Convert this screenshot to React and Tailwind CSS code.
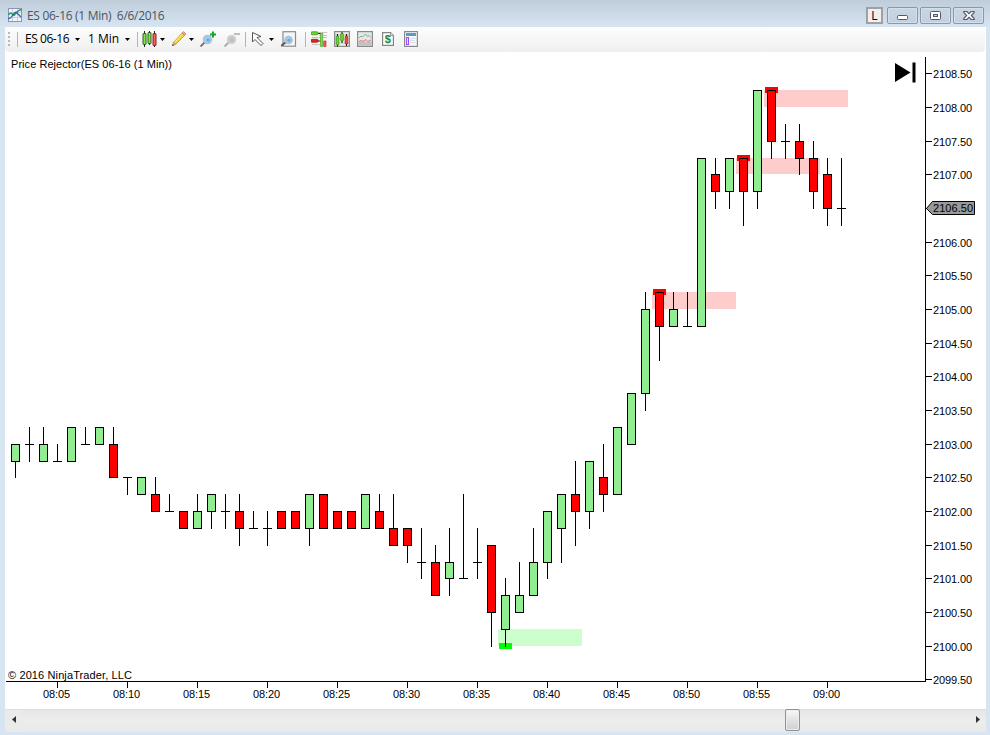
import React from 'react'

// levels are quarter point steps below 2108.50: [type, high, bodyTop, bodyBottom, low]
const candles = [
  ['up', 22, 22, 23, 24], ['flat', 21, 22, 22, 23], ['up', 21, 22, 23, 23], ['flat', 22, 23, 23, 23],
  ['up', 21, 21, 23, 23], ['flat', 21, 22, 22, 22], ['up', 21, 21, 22, 22], ['down', 21, 22, 24, 24],
  ['flat', 24, 24, 24, 25], ['up', 24, 24, 25, 25], ['down', 24, 25, 26, 26], ['flat', 25, 26, 26, 26],
  ['down', 26, 26, 27, 27], ['up', 25, 26, 27, 27], ['up', 25, 25, 26, 27], ['flat', 25, 26, 26, 27],
  ['down', 25, 26, 27, 28], ['flat', 26, 27, 27, 27], ['flat', 26, 27, 27, 28], ['down', 26, 26, 27, 27],
  ['down', 26, 26, 27, 27], ['up', 25, 25, 27, 28], ['down', 25, 25, 27, 27], ['down', 26, 26, 27, 27],
  ['down', 26, 26, 27, 27], ['up', 25, 25, 27, 27], ['down', 25, 26, 27, 27], ['down', 25, 27, 28, 28],
  ['down', 27, 27, 28, 29], ['flat', 27, 29, 29, 30], ['down', 28, 29, 31, 31], ['up', 27, 29, 30, 31],
  ['flat', 25, 30, 30, 30], ['flat', 27, 29, 29, 30], ['down', 28, 28, 32, 34], ['up', 30, 31, 33, 34],
  ['up', 29, 31, 32, 32], ['up', 27, 29, 31, 31], ['up', 26, 26, 29, 30], ['up', 25, 25, 27, 29],
  ['down', 23, 25, 26, 28], ['up', 23, 23, 26, 27], ['down', 22, 24, 25, 26], ['up', 21, 21, 25, 25],
  ['up', 19, 19, 22, 22], ['up', 13, 14, 19, 20], ['down', 13, 13, 15, 17], ['up', 13, 14, 15, 15],
  ['flat', 13, 15, 15, 15], ['up', 5, 5, 15, 15], ['down', 5, 6, 7, 8], ['up', 5, 5, 7, 8],
  ['down', 5, 5, 7, 9], ['up', 1, 1, 7, 8], ['down', 1, 1, 4, 5], ['flat', 3, 4, 4, 5],
  ['down', 3, 4, 5, 6], ['down', 4, 5, 7, 8], ['down', 5, 6, 8, 9], ['flat', 5, 8, 8, 9],
]

const zones = [
  { bar: 35, top: 33, bottom: 34, at: 34, fill: '#ccffcc', mark: '#00ff00' },
  { bar: 46, top: 13, bottom: 14, at: 13, fill: '#ffcccc', mark: '#ff0000' },
  { bar: 52, top: 5, bottom: 6, at: 5, fill: '#ffcccc', mark: '#ff0000' },
  { bar: 54, top: 1, bottom: 2, at: 1, fill: '#ffcccc', mark: '#ff0000' },
]

const times = ['08:05', '08:10', '08:15', '08:20', '08:25', '08:30', '08:35', '08:40', '08:45', '08:50', '08:55', '09:00']

// the svg starts below the title and tool bars, 6px in from the frame
const px = (i) => 9 + i * 14
const py = (n) => Math.round(21.4 + n * 16.8333)

const Candle = ({ data, i }) => {
  const [type, high, top, bottom, low] = data
  const x = px(i)
  return (
    <g>
      <rect x={x} y={py(high)} width="1" height={py(low) - py(high) + 1} fill="#000" />
      <rect x={x - 4} y={py(top)} width="9" height={py(bottom) - py(top) + 1} fill="#000" />
      {type !== 'flat' && (
        <rect x={x - 3} y={py(top) + 1} width="7" height={py(bottom) - py(top) - 1} fill={type === 'up' ? '#90ee90' : '#ff0000'} />
      )}
    </g>
  )
}

const Chart = () => (
  <svg width="980" height="657" viewBox="0 0 980 657" className="block shrink-0" shapeRendering="crispEdges" fontFamily="'Liberation Sans', Arial, sans-serif" fontSize="11">
    {zones.map((z) => (
      <rect key={z.bar} x={px(z.bar) - 7} y={py(z.top)} width="84" height={py(z.bottom) - py(z.top)} fill={z.fill} />
    ))}
    {zones.map((z) => (
      <rect key={z.bar} x={px(z.bar) - 6} y={py(z.at) - 3} width="13" height="6" fill={z.mark} />
    ))}
    {candles.map((c, i) => <Candle key={i} data={c} i={i} />)}

    <text x="5" y="16" textLength="161" fill="#000">Price Rejector(ES 06-16 (1 Min))</text>
    <text x="2" y="627" textLength="124" fill="#000">© 2016 NinjaTrader, LLC</text>
    <path d="M889 11 L904.500 20.5 L889 30 Z M906.500 10.500 h3 v20 h-3 z" fill="#000" shapeRendering="auto" />

    <rect x="919" y="5" width="1" height="625" fill="#000" />
    <rect x="0" y="629" width="920" height="1" fill="#000" />
    {Array.from({ length: 19 }, (_, k) => (
      <g key={k}>
        <rect x="920" y={py(k * 2)} width="6" height="1" fill="#000" />
        {k !== 4 && <text x="927" y={py(k * 2) + 5} textLength="39">{(2108.5 - k * 0.5).toFixed(2)}</text>}
      </g>
    ))}
    {times.map((t, k) => (
      <g key={t}>
        <rect x={px(3 + k * 5)} y="630" width="1" height="6" fill="#000" />
        <text x={px(3 + k * 5) - 14} y="646" textLength="27">{t}</text>
      </g>
    ))}
    <path d="M920.5 156.5 L926.5 149.5 H968.5 V162.5 H926.5 Z" fill="#999" stroke="#000" shapeRendering="auto" />
    <text x="927" y="160" textLength="40">2106.50</text>
  </svg>
)

const Caret = () => (
  <svg width="5" height="3" viewBox="0 0 5 3" className="shrink-0"><path d="M0 0h5L2.5 3z" fill="#000" /></svg>
)

const Sep = ({ className }) => <div className={`h-[15px] w-px shrink-0 bg-[#b5b5b5] ${className}`} />

const Icon = ({ children, w = 16, className = '' }) => (
  <svg width={w} height="16" viewBox={`0 0 ${w} 16`} fill="none" className={`shrink-0 ${className}`}>{children}</svg>
)

const Lens = ({ gray }) => (
  <>
    <path d="M.5 15.500L5 11" stroke={gray ? '#a8a8a8' : '#6d6d6d'} strokeWidth="1.800" />
    <circle cx="7.5" cy="8.500" r="4.200" fill={gray ? '#c9c9c9' : '#a3cdec'} stroke={gray ? '#d6d6d6' : '#b4bfc8'} strokeWidth="1.200" />
    <circle cx="8" cy="9" r="1.800" fill={gray ? '#bdbdbd' : '#6faedb'} />
  </>
)

const Toolbar = () => (
  <div className="flex h-[25px] w-[980px] shrink-0 items-center rounded-b-sm bg-linear-to-b from-[#fdfdfd] to-[#efefef] pb-px">
    <svg width="3" height="15" viewBox="0 0 3 15" className="ml-[3px] shrink-0" fill="#b8b8b8">
      <path d="M0 0h2v2H0zM0 4h2v2H0zM0 8h2v2H0zM0 12h2v2H0z" />
    </svg>
    <Sep className="ml-[6px]" />
    <span className="ml-[7px] w-[45px] text-[12px] leading-4 tracking-[-0.45px] whitespace-nowrap">ES 06-16</span>
    <div className="ml-[5px] flex"><Caret /></div>
    <span className="ml-[8px] w-[32px] text-[12px] leading-4 whitespace-nowrap">1 Min</span>
    <div className="ml-[5px] flex"><Caret /></div>
    <Sep className="ml-[7px]" />
    <Icon className="ml-[4px]">
      <path d="M2.500 0v16M7.500 0v14M12.500 0v16" stroke="#222" />
      <rect x="1" y="2.500" width="3" height="11" rx=".5" fill="#84e84c" stroke="#1c4a14" strokeWidth=".9" />
      <rect x="6" y="1.500" width="3" height="11" rx=".5" fill="#84e84c" stroke="#1c4a14" strokeWidth=".9" />
      <rect x="11" y="2.500" width="3" height="12" rx=".5" fill="#f4625a" stroke="#7a1414" strokeWidth=".9" />
    </Icon>
    <div className="ml-[2px] flex"><Caret /></div>
    <Icon className="ml-[6px]">
      <path d="M2.500 11.500l8.500-9.500 2.500 2.500-9 9z" fill="#f9d428" stroke="#b38a1c" strokeWidth=".7" />
      <path d="M4 11l7.500-8" stroke="#fff08a" />
      <path d="M11 2l1.500-1.500 2.500 2.500-1.500 1.500z" fill="#f3a296" stroke="#b76b5d" strokeWidth=".6" />
      <path d="M1.500 14.500l1-3.300 2.300 2.300z" fill="#e8c99a" stroke="#8d7247" strokeWidth=".5" />
      <path d="M1 15l.8-2 1.200 1.200z" fill="#333" />
    </Icon>
    <div className="ml-[2px] flex"><Caret /></div>
    <Icon className="ml-[6px]">
      <Lens />
      <path d="M10 3.500h6M13 .5v6" stroke="#0eaa2c" strokeWidth="2" />
    </Icon>
    <Icon className="ml-[8px]">
      <Lens gray />
      <path d="M10 3h6" stroke="#bdbdbd" strokeWidth="2" />
    </Icon>
    <Sep className="ml-[5px]" />
    <Icon w={14} className="ml-[5px]">
      <path d="M1.500 1.500v9.500l2.500-2.500 6 6 2-2-6-6 4-1z" fill="#fff" stroke="#444" strokeWidth=".9" />
    </Icon>
    <div className="ml-[4px] flex"><Caret /></div>
    <Icon className="ml-[7px]">
      <rect x="2" y=".7" width="12.500" height="14.500" fill="#f5f5f5" stroke="#8c8c8c" strokeWidth="1.200" />
      <path d="M0 15l5-4" stroke="#555" strokeWidth="2" />
      <circle cx="7.500" cy="9" r="3.800" fill="#a3cdec" stroke="#aab9c6" />
      <circle cx="8" cy="9.300" r="1.700" fill="#6faedb" />
    </Icon>
    <Sep className="ml-[8px]" />
    <Icon className="ml-[5px]">
      <path d="M8 1.500h8M8 4.500h8M1 6.500h15M1 13.500h14" stroke="#c4c4c4" />
      <rect x="0" y=".8" width="7" height="3" rx="1" fill="#64df15" stroke="#2f8e0c" strokeWidth=".7" />
      <rect x="0" y="8.300" width="7" height="3" rx="1" fill="#e82218" stroke="#8e170f" strokeWidth=".7" />
      <path d="M7 2.500h3M7 10h3" stroke="#222" />
      <rect x="9.300" y="2.500" width="2.500" height="13" fill="#7be436" stroke="#4d9a2c" strokeWidth=".6" />
      <rect x="12.800" y="10" width="2.200" height="5.500" fill="#ff5a50" stroke="#a82222" strokeWidth=".6" />
    </Icon>
    <Icon className="ml-[7px]">
      <rect x=".6" y=".6" width="14.800" height="14.800" fill="#ececec" stroke="#8a8a8a" strokeWidth="1.200" />
      <path d="M1 4h14M1 8h14M1 12h14" stroke="#b8b8b8" strokeWidth=".8" />
      <path d="M3.500 3v12.500M8 1v11M12.500 3v12" stroke="#111" />
      <rect x="2.200" y="5" width="2.600" height="9" rx=".6" fill="#68e41e" stroke="#226b12" strokeWidth=".6" />
      <rect x="6.700" y="2.500" width="2.600" height="7.500" rx=".6" fill="#68e41e" stroke="#226b12" strokeWidth=".6" />
      <rect x="11.200" y="5" width="2.600" height="8" rx=".6" fill="#f6493f" stroke="#971313" strokeWidth=".6" />
    </Icon>
    <Icon className="ml-[7px]">
      <rect x=".6" y=".6" width="14.800" height="14.800" fill="#e6e6e6" stroke="#8a8a8a" strokeWidth="1.200" />
      <path d="M1.200 10.500h13.600v4.300H1.200z" fill="#c2c2c2" />
      <path d="M2 7l2-2 1.500 1 3-3 2 2.500 1.500-1 2 2" stroke="#5fb489" strokeWidth=".9" />
      <path d="M2 10.500l2-1 2 1 3-2 2 2 3-1.500" stroke="#e66a6a" strokeWidth=".9" />
    </Icon>
    <Icon w={12} className="ml-[9px]">
      <path d="M.6 1.600h8l2.800 2.800v10H.6z" fill="#fff" stroke="#868686" strokeWidth="1.200" />
      <path d="M8.500 1.500v3h3" fill="#ddd" stroke="#868686" strokeWidth=".8" />
      <text x="2.800" y="12" fontSize="11" fontWeight="700" fill="#26862a" fontFamily="'Liberation Sans', Arial, sans-serif">$</text>
    </Icon>
    <Icon w={14} className="ml-[10px]">
      <rect x=".6" y=".6" width="12.800" height="14.800" fill="#f7f7fb" stroke="#8a8a8a" strokeWidth="1.200" />
      <rect x="2" y="2" width="10" height="3" fill="#559ecb" />
      <rect x="2.500" y="6.500" width="2" height="7" fill="#eadcff" stroke="#9450f5" />
      <path d="M6 7.500h6M6 9.500h5M6 11.500h6" stroke="#dcdfe9" />
    </Icon>
  </div>
)

const WinButton = ({ children }) => (
  <button className="flex h-[17px] w-[31px] items-center justify-center rounded-[2px] border border-[#8a97ad] bg-linear-to-b from-[#c9d6e4] to-[#c1cfdf] shadow-[inset_0_0_0_1px_#d3dfeb]">
    {children}
  </button>
)

const TitleBar = () => (
  <div className="flex h-[27px] shrink-0 items-start bg-linear-to-b from-[#bfcddb] to-[#d7e4f1] pl-2">
    <svg width="14" height="14" viewBox="0 0 14 14" fill="none" className="mt-2">
      <rect x=".5" y=".5" width="13" height="13" fill="#f3f5fa" stroke="#8f94b5" />
      <path d="M1 4.500h12M1 9.500h12M4.500 1v12M9.500 1v12" stroke="#c9cde0" />
      <path d="M0 6.500l3-1.500 3 2.500L9 4l2-1.500L14 1.500" stroke="#20a05a" strokeWidth="1.400" />
      <path d="M0 11l3-1.500 3-4 2-1.500 3 3 2 2" stroke="#2464a8" strokeWidth="1.200" />
    </svg>
    <span className="mt-2 ml-[5px] text-[12px] leading-4 tracking-[-0.3px] whitespace-pre text-[#4c545e]">ES 06-16 (1 Min)  6/6/2016</span>
    <div className="mt-[7px] mr-[6px] ml-auto flex items-center gap-[2px]">
      <div className="mr-[2px] flex h-[17px] w-[17px] items-center justify-center border-2 border-[#a0a0a0] bg-[#f0f0f0] text-[12px] leading-3 text-black">L</div>
      <WinButton>
        <svg width="12" height="6" viewBox="0 0 12 6" className="mt-1"><rect x=".5" y=".5" width="10" height="4" rx="1" fill="#fff" stroke="#535666" /></svg>
      </WinButton>
      <WinButton>
        <svg width="11" height="9" viewBox="0 0 11 9" fill="#fff" stroke="#535666"><rect x=".5" y=".5" width="10" height="8" rx="1" /><rect x="3.500" y="3.500" width="4" height="2" fill="#c3d0df" /></svg>
      </WinButton>
      <WinButton>
        <svg width="12" height="9" viewBox="0 0 12 9"><path d="M.8.5h3L6 2.700 8.200.5h3v1L8.300 4.500l2.900 3v1h-3L6 6.300 3.800 8.500h-3v-1l2.900-3L.8 1.500z" fill="#fff" stroke="#535666" strokeWidth="1.100" /></svg>
      </WinButton>
    </div>
  </div>
)

const ScrollBar = () => (
  <div className="flex h-[23px] shrink-0 items-start border-t border-[#dedede] bg-linear-to-b from-[#e6e6e6] via-[#ededed] to-[#e9e9e9]">
    <div className="flex h-[19px] w-[17px] items-center justify-center bg-[#ebebeb]">
      <svg width="4" height="7" viewBox="0 0 4 7"><path d="M4 0v7L0 3.500z" fill="#333" /></svg>
    </div>
    <div className="-mt-px ml-[763px] h-[22px] w-[15px] rounded-[2px] border border-[#929292] bg-linear-to-b from-[#f5f5f5] from-10% via-[#e6e6e8] via-40% to-[#cfcfd2] shadow-[inset_0_0_0_1px_#ececec]" />
    <div className="ml-auto flex h-[19px] w-[17px] items-center justify-center">
      <svg width="4" height="7" viewBox="0 0 4 7"><path d="M0 0v7l4-3.500z" fill="#333" /></svg>
    </div>
  </div>
)

const App = () => {
  return (
    <div className="flex h-[735px] w-[990px] flex-col overflow-hidden bg-[#d7e4f2] font-['Open_Sans','Noto_Sans',sans-serif] text-black">
      <TitleBar />
      <div className="mr-[4px] ml-[5px] flex flex-col bg-white">
        <Toolbar />
        <div className="pl-px">
          <Chart />
        </div>
        <ScrollBar />
      </div>
    </div>
  )
}

export default App
